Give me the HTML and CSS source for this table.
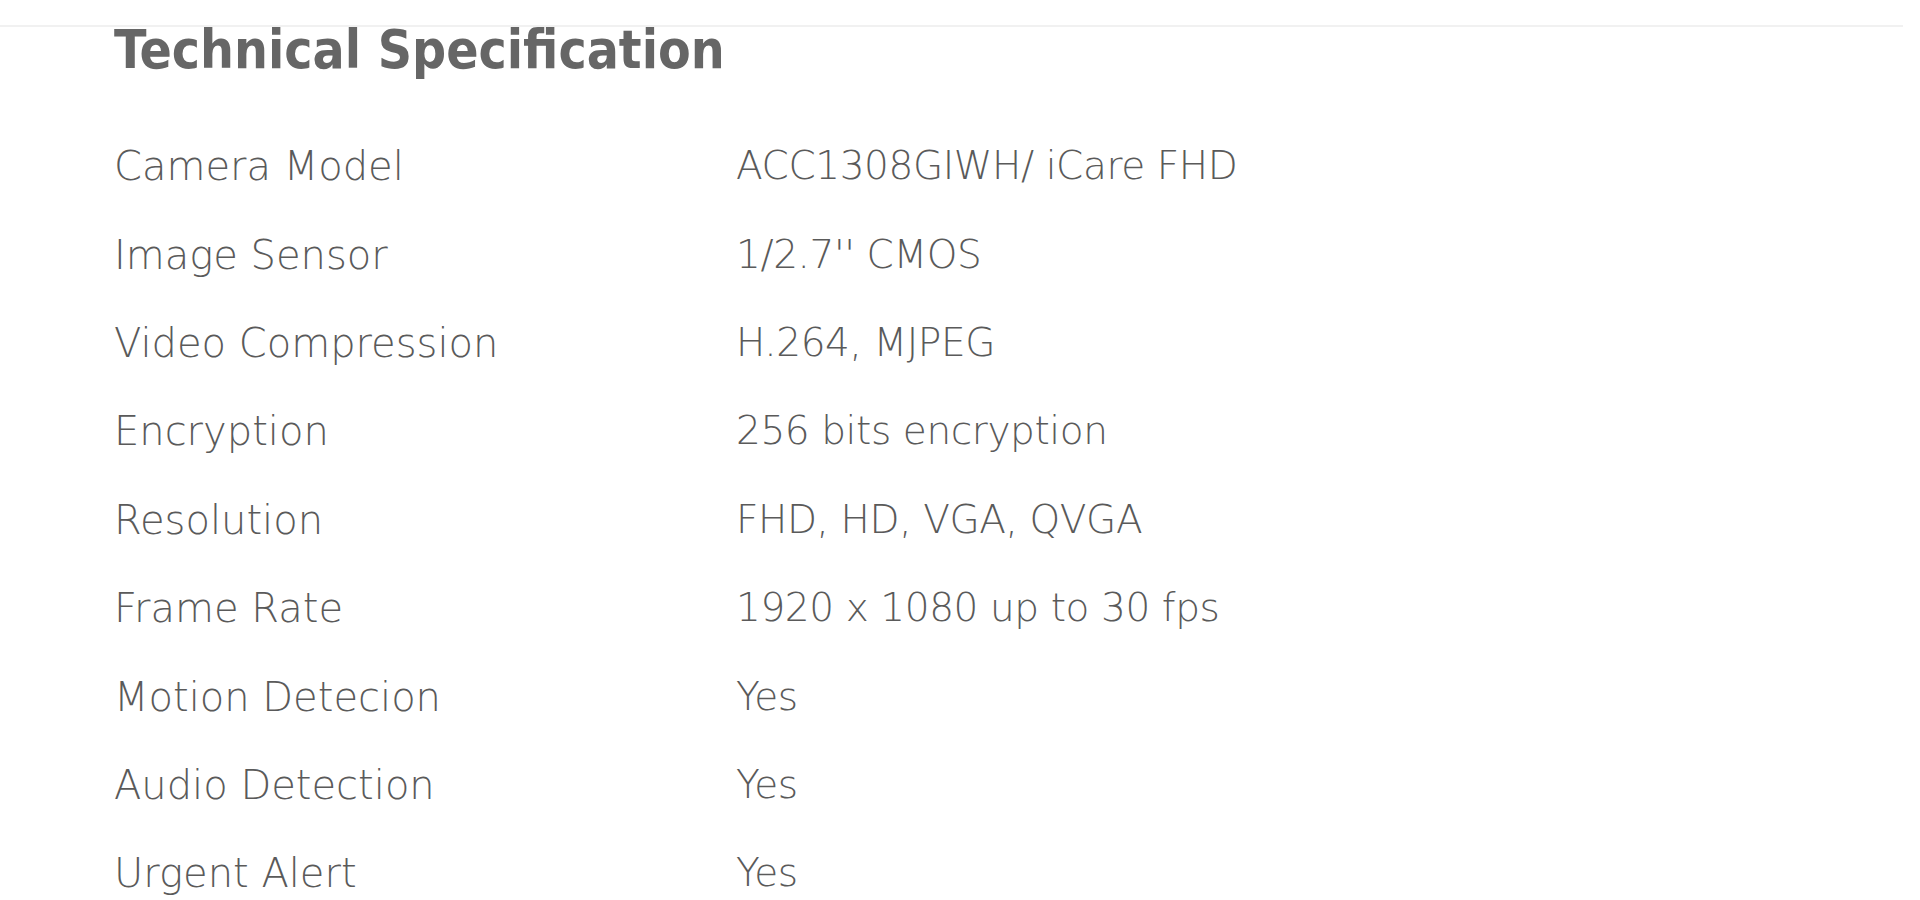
FILE: index.html
```html
<!DOCTYPE html>
<html lang="en">
<head>
<meta charset="utf-8">
<title>Technical Specification</title>
<link rel="stylesheet" href="styles.css">
</head>
<body>
<div class="topbar"></div>
<section class="spec">
  <h2 class="spec-title">Technical Specification</h2>
  <div class="spec-table">
    <div class="spec-label">Camera Model</div><div class="spec-value">ACC1308GIWH/ iCare FHD</div>
    <div class="spec-label">Image Sensor</div><div class="spec-value">1/2.7'' CMOS</div>
    <div class="spec-label">Video Compression</div><div class="spec-value">H.264, MJPEG</div>
    <div class="spec-label">Encryption</div><div class="spec-value">256 bits encryption</div>
    <div class="spec-label">Resolution</div><div class="spec-value">FHD, HD, VGA, QVGA</div>
    <div class="spec-label">Frame Rate</div><div class="spec-value">1920 x 1080 up to 30 fps</div>
    <div class="spec-label">Motion Detecion</div><div class="spec-value">Yes</div>
    <div class="spec-label">Audio Detection</div><div class="spec-value">Yes</div>
    <div class="spec-label">Urgent Alert</div><div class="spec-value">Yes</div>
  </div>
</section>
</body>
</html>
```

FILE: styles.css
```css
html, body {
  margin: 0;
  padding: 0;
  background: #ffffff;
  overflow: hidden;
}

body {
  font-family: "DejaVu Sans", "Liberation Sans", sans-serif;
  color: #666666;
}

.topbar {
  width: 1903px;
  height: 25px;
  border-bottom: 2px solid #f1f1f1;
}

.spec {
  padding: 1px 0 0 114px;
}

.spec-title {
  margin: 0;
  font-family: "DejaVu Sans Condensed", "DejaVu Sans", sans-serif;
  font-stretch: condensed;
  font-weight: bold;
  font-size: 53px;
  line-height: 44px;
  color: #666666;
}

.spec-table {
  margin-top: 50px;
  display: grid;
  grid-template-columns: 622px auto;
  grid-auto-rows: 88.4px;
  align-items: center;
  font-size: 40px;
  font-weight: 300;
  line-height: 46px;
  color: #5a5a5a;
}

.spec-value {
  font-size: 39px;
  letter-spacing: -0.4px;
}

.spec-label,
.spec-value {
  white-space: nowrap;
}
```
